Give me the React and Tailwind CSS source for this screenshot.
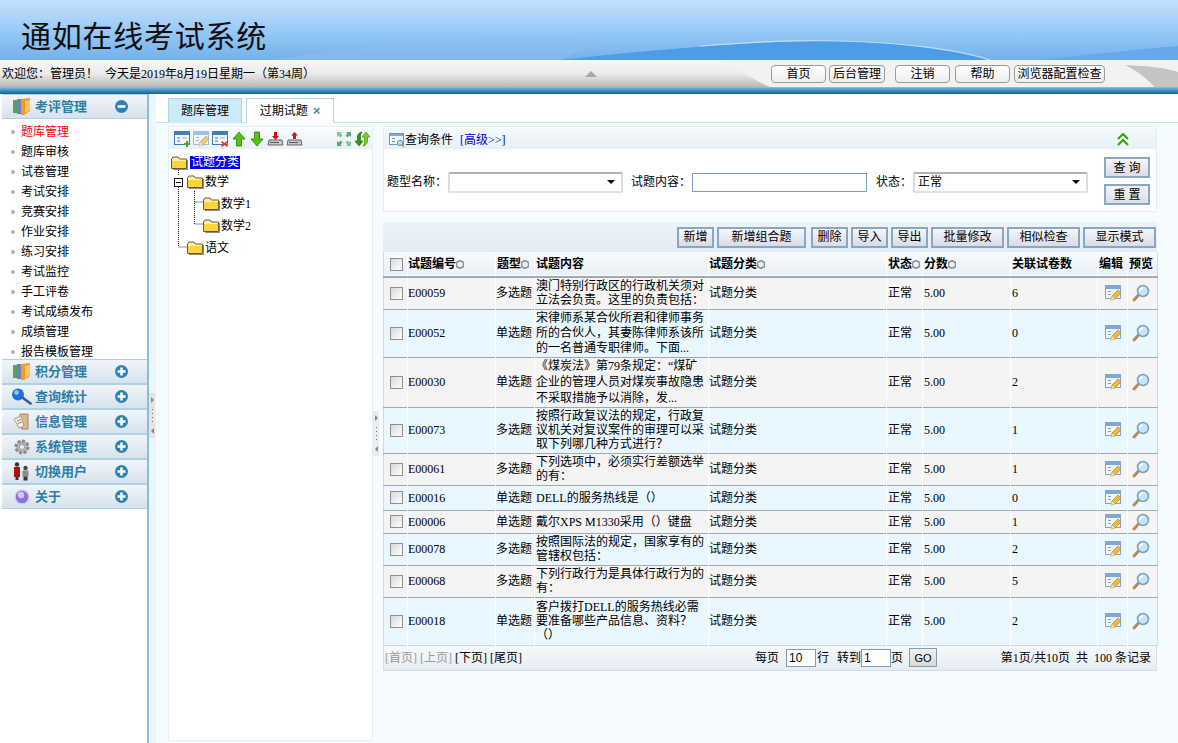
import { Fragment } from "react";

const menuItems = ["题库管理", "题库审核", "试卷管理", "考试安排", "竞赛安排", "作业安排", "练习安排", "考试监控", "手工评卷", "考试成绩发布", "成绩管理", "报告模板管理"];

const rows = [
  { id: "E00059", type: "多选题", content: "澳门特别行政区的行政机关须对\n立法会负责。这里的负责包括：", status: "正常", links: 6, h: "h-[32px]", lh: "leading-[14px]" },
  { id: "E00052", type: "单选题", content: "宋律师系某合伙所君和律师事务\n所的合伙人，其妻陈律师系该所\n的一名普通专职律师。下面...", status: "正常", links: 0, h: "h-[48px]", lh: "leading-[15px]" },
  { id: "E00030", type: "单选题", content: "《煤炭法》第79条规定：“煤矿\n企业的管理人员对煤炭事故隐患\n不采取措施予以消除，发...", status: "正常", links: 2, h: "h-[50px]", lh: "leading-[16px]" },
  { id: "E00073", type: "多选题", content: "按照行政复议法的规定，行政复\n议机关对复议案件的审理可以采\n取下列哪几种方式进行？", status: "正常", links: 1, h: "h-[46px]", lh: "leading-[14px]" },
  { id: "E00061", type: "多选题", content: "下列选项中，必须实行差额选举\n的有：", status: "正常", links: 1, h: "h-[32px]", lh: "leading-[14px]" },
  { id: "E00016", type: "单选题", content: "DELL的服务热线是（）", status: "正常", links: 0, h: "h-[25px]", lh: "leading-[14px]" },
  { id: "E00006", type: "单选题", content: "戴尔XPS M1330采用（）键盘", status: "正常", links: 1, h: "h-[23px]", lh: "leading-[14px]" },
  { id: "E00078", type: "多选题", content: "按照国际法的规定，国家享有的\n管辖权包括：", status: "正常", links: 2, h: "h-[32px]", lh: "leading-[14px]" },
  { id: "E00068", type: "多选题", content: "下列行政行为是具体行政行为的\n有：", status: "正常", links: 5, h: "h-[32px]", lh: "leading-[14px]" },
  { id: "E00018", type: "单选题", content: "客户拨打DELL的服务热线必需\n要准备哪些产品信息、资料？\n （）", status: "正常", links: 2, h: "h-[48px]", lh: "leading-[14px]" },
];

function WindowBase({ children }) {
  return (
    <svg width="17" height="16" viewBox="0 0 17 16" className="shrink-0">
      <rect x="0.5" y="0.5" width="15" height="13" fill="#f4f8fc" stroke="#3f76b8" />
      <rect x="1" y="1" width="14" height="3" fill="#3f7fc8" />
      <rect x="3" y="6" width="3" height="2" fill="#9db8d8" />
      <rect x="3" y="9" width="3" height="2" fill="#9db8d8" />
      <rect x="8" y="6" width="5" height="2" fill="#c4d4e6" />
      {children}
    </svg>
  );
}

function EditIcon({ faded }) {
  return (
    <svg width="17" height="16" viewBox="0 0 17 16" className={`shrink-0 ${faded ? "opacity-70" : ""}`}>
      <rect x="0.5" y="0.5" width="15" height="13" fill="#f2f7fc" stroke="#7ea6d2" />
      <rect x="1" y="1" width="14" height="3" fill="#7fa9dc" />
      <rect x="3" y="6" width="3" height="1" fill="#7ea6d2" />
      <rect x="3" y="9" width="3" height="1" fill="#7ea6d2" />
      <path d="M6 15 L7 11 L13 5 L16 8 L10 14 Z" fill="#f2b842" stroke="#b57d1c" strokeWidth="0.7" />
      <path d="M6 15 L7 11.5 L9.5 14 Z" fill="#f8e6c0" />
    </svg>
  );
}

function LensIcon() {
  return (
    <svg width="18" height="18" viewBox="0 0 18 18" className="shrink-0">
      <path d="M2 16 L7 10.5" stroke="#b98a54" strokeWidth="3" strokeLinecap="round" />
      <circle cx="11" cy="7" r="5.5" fill="#c4e6fa" stroke="#7d9fb8" strokeWidth="1.5" />
      <path d="M8 7 A3 3 0 0 1 11 4" fill="none" stroke="#fff" strokeWidth="1.4" />
    </svg>
  );
}

function ArrowIcon({ down }) {
  return (
    <svg width="14" height="16" viewBox="0 0 14 16" className={`shrink-0 mx-[1px] ${down ? "rotate-180" : ""}`}>
      <path d="M7 1 L13 8 H9.5 V15 H4.5 V8 H1 Z" fill="#54c414" stroke="#2c7d08" strokeWidth="0.8" />
    </svg>
  );
}

function DiskIcon({ up }) {
  return (
    <svg width="17" height="16" viewBox="0 0 17 16" className="shrink-0">
      <path d="M2 9 H15 L16 14 H1 Z" fill="#c9c9c9" stroke="#4a4a4a" strokeWidth="0.8" />
      <rect x="3" y="11" width="9" height="1" fill="#555" />
      {up
        ? <path d="M8.5 1 L12 4.5 H10 V8 H7 V4.5 H5 Z" fill="#e01010" />
        : <path d="M8.5 9 L12 5 H10 V1 H7 V5 H5 Z" fill="#c81010" />}
    </svg>
  );
}

function ExpandIcon() {
  return (
    <svg width="16" height="16" viewBox="0 0 16 16" className="shrink-0">
      <path d="M1 1 H6 L4.5 2.5 L6.5 4.5 L4.5 6.5 L2.5 4.5 L1 6 Z" fill="#7fc49a" />
      <path d="M15 1 H10 L11.5 2.5 L9.5 4.5 L11.5 6.5 L13.5 4.5 L15 6 Z" fill="#58ab62" />
      <path d="M1 15 H6 L4.5 13.5 L6.5 11.5 L4.5 9.5 L2.5 11.5 L1 10 Z" fill="#58ab62" />
      <path d="M15 15 H10 L11.5 13.5 L9.5 11.5 L11.5 9.5 L13.5 11.5 L15 10 Z" fill="#7fc49a" />
    </svg>
  );
}

function SwapIcon() {
  return (
    <svg width="17" height="16" viewBox="0 0 17 16" className="shrink-0">
      <path d="M5 15 L1 10 H3.5 V6 C3.5 3 6 1 8 1 C6.8 2 6.5 4 6.5 6 V10 H9 Z" fill="#2f9a12" stroke="#17600a" strokeWidth="0.6" />
      <path d="M12 1 L16 6 H13.5 V10 C13.5 13 11 15 9 15 C10.2 14 10.5 12 10.5 10 V6 H8 Z" fill="#7ad323" stroke="#2c7d08" strokeWidth="0.6" />
    </svg>
  );
}

function FolderIcon() {
  return (
    <svg width="17" height="14" viewBox="0 0 17 14" className="shrink-0">
      <path d="M0.5 3 L2 1 H7 L8.5 3 H15.5 V12.5 H0.5 Z" fill="#fff0a8" stroke="#6b5a2a" />
      <rect x="1" y="5" width="14" height="7" fill="#fdd43c" />
      <rect x="2" y="13" width="15" height="1" fill="#8a8a8a" />
      <rect x="16" y="4" width="1" height="9" fill="#8a8a8a" />
    </svg>
  );
}

function SortIcon() {
  return (
    <svg width="8" height="9" viewBox="0 0 8 9" className="inline-block shrink-0 align-[-1px]">
      <path d="M4 0.5 L7.5 2.5 V6.5 L4 8.5 L0.5 6.5 V2.5 Z" fill="#eeeeee" stroke="#8c9299" strokeWidth="1.6" />
    </svg>
  );
}

function BooksIcon() {
  return (
    <svg width="18" height="20" viewBox="0 0 18 20" className="shrink-0">
      <rect x="0" y="3" width="4" height="13" fill="#58a05c" />
      <rect x="4" y="2" width="4" height="15" fill="#5f86c0" />
      <path d="M8 2 L17 1 V14 L11 18 H8 Z" fill="#f49b24" />
      <path d="M12 4 L17 3 V13 L12 16 Z" fill="#fbc56a" />
    </svg>
  );
}

function SearchIcon() {
  return (
    <svg width="21" height="18" viewBox="0 0 21 18" className="shrink-0">
      <circle cx="7" cy="6.5" r="6" fill="#1f6fd8" />
      <circle cx="5.5" cy="4.5" r="2.4" fill="#8cc4f8" />
      <path d="M12 10 L19.5 15.5" stroke="#2a5d9c" strokeWidth="2.6" strokeLinecap="round" />
    </svg>
  );
}

function InfoIcon() {
  return (
    <svg width="18" height="18" viewBox="0 0 18 18" className="shrink-0">
      <path d="M7 1 H15 V16 H9 L7 14 Z" fill="#d9b98c" stroke="#a88557" />
      <path d="M1 6 L8 3 L11 13 L6 15 Z" fill="#f7f3e8" stroke="#a8a08c" />
      <path d="M4 8 L8 6.5 M5 10.5 L9 9" stroke="#b44" strokeWidth="0.8" />
    </svg>
  );
}

function GearIcon() {
  return (
    <svg width="18" height="18" viewBox="0 0 18 18" className="shrink-0">
      <circle cx="9" cy="9" r="6" fill="#b8b8b8" stroke="#8a8a8a" strokeWidth="3" strokeDasharray="3 1.6" />
      <circle cx="9" cy="9" r="2.5" fill="#efefef" stroke="#777" strokeWidth="0.6" />
    </svg>
  );
}

function UsersIcon() {
  return (
    <svg width="17" height="19" viewBox="0 0 17 19" className="shrink-0">
      <circle cx="4" cy="2.5" r="2.2" fill="#333" />
      <rect x="1" y="5" width="6" height="10" fill="#b01010" />
      <circle cx="12.5" cy="6" r="2.2" fill="#444" />
      <rect x="9.5" y="8.5" width="6" height="6" fill="#8a8a8a" />
      <rect x="10.5" y="14.5" width="4" height="4" fill="#333" />
      <rect x="2.5" y="15" width="3" height="3" fill="#333" />
    </svg>
  );
}

function OrbIcon() {
  return (
    <svg width="16" height="16" viewBox="0 0 16 16" className="shrink-0">
      <circle cx="8" cy="8" r="7" fill="#8f6fe0" stroke="#d8d0f4" strokeWidth="1.4" />
      <circle cx="7" cy="6" r="3.2" fill="#d5c8fa" />
    </svg>
  );
}

function ToggleIcon({ open }) {
  return (
    <svg width="13" height="13" viewBox="0 0 13 13" className="shrink-0">
      <circle cx="6.5" cy="6.5" r="6.5" fill="#2a83b6" />
      <rect x="2.5" y="5.2" width="8" height="2.6" fill="#fff" />
      {!open && <rect x="5.2" y="2.5" width="2.6" height="8" fill="#fff" />}
    </svg>
  );
}

function MenuHeader({ icon, label, open }) {
  return (
    <div className="relative h-[25px] flex items-center pl-[9px] pr-[19px] ml-[2px] bg-gradient-to-b from-[#f1f5f9] to-[#d7e2ec] border-t border-b border-t-[#a9d4e6] border-b-[#a9d4e6]">
      <span className="w-[23px] flex justify-center -ml-[1px] mr-[2px]">{icon}</span>
      <span className="flex-1 text-[13px] font-bold text-[#2a7ea8]">{label}</span>
      <ToggleIcon open={open} />
    </div>
  );
}

function ActionButton({ children, w }) {
  return (
    <button className={`${w} h-[21px] border-2 border-[#86a8c2] bg-gradient-to-b from-[#f6f6fa] to-[#d9dbe6] text-[12px] leading-[16px] text-black flex items-center justify-center`}>
      {children}
    </button>
  );
}

function NavButton({ children, w, ml }) {
  return (
    <button className={`${w} ${ml} h-[18px] rounded-[4px] border border-[#9a9a9a] bg-gradient-to-b from-white to-[#eeeeee] text-[12px] leading-[16px] text-black flex items-center justify-center whitespace-nowrap`}>
      {children}
    </button>
  );
}

function FakeSelect({ w, value }) {
  return (
    <div className={`${w} h-[21px] border-2 border-t-[#b2b2b2] border-l-[#dddddd] border-r-[#dddddd] border-b-[#e2e2e2] rounded-[2px] bg-white flex items-center justify-between pl-[3px] pr-[6px]`}>
      <span>{value}</span>
      <span className="w-0 h-0 border-l-[4px] border-r-[4px] border-t-[4px] border-l-transparent border-r-transparent border-t-black" />
    </div>
  );
}

function Check() {
  return <input type="checkbox" className="appearance-none block w-[13px] h-[13px] ml-[2px] border border-[#8f8f8f] bg-gradient-to-br from-[#d8d8d8] to-white" />;
}

function SplitHandle({ className }) {
  return (
    <div className={`w-[6px] h-[45px] flex flex-col items-center justify-between py-[4px] ${className}`}>
      <span className="w-0 h-0 border-t-[3px] border-b-[3px] border-l-[3px] border-t-transparent border-b-transparent border-l-[#888]" />
      <span className="flex flex-col gap-[3px]">
        <span className="w-px h-px bg-[#777]" />
        <span className="w-px h-px bg-[#777]" />
        <span className="w-px h-px bg-[#777]" />
        <span className="w-px h-px bg-[#777]" />
      </span>
      <span className="w-0 h-0 border-t-[3px] border-b-[3px] border-r-[3px] border-t-transparent border-b-transparent border-r-[#888]" />
    </div>
  );
}

export default function App() {
  return (
    <div className="w-[1178px] h-[743px] overflow-hidden flex flex-col bg-white text-[12px] leading-[14px] text-black font-['Liberation_Serif','Noto_Sans_CJK_SC',serif]">
      {/* Banner */}
      <div className="relative h-[60px] shrink-0 bg-gradient-to-b from-[#c2e2ff] to-[#72b1ec] overflow-hidden">
        <svg className="absolute inset-0" width="1178" height="60" viewBox="0 0 1178 60">
          <path d="M560 60 C650 50 760 40 840 41 C900 42 960 50 990 60 Z" fill="#4c9ce9" />
          <path d="M700 46 C760 41 800 40 840 41 C900 42 960 50 990 60" fill="none" stroke="#bcdcf8" strokeWidth="1.2" />
          <path d="M1040 60 C1080 56 1130 50 1178 46 V60 Z" fill="#64a9ec" />
          <path d="M270 60 C330 50 400 44 480 40 C520 38 560 38 600 42 L560 60 Z" fill="#8dbef0" opacity="0.5" />
        </svg>
        <div className="relative pl-[21px] pt-[15px] text-[30px] leading-[38px] tracking-[0.75px] text-[#111] font-['Noto_Sans_CJK_SC',sans-serif]">通如在线考试系统</div>
      </div>

      {/* Welcome bar */}
      <div className="relative h-[27px] shrink-0 bg-gradient-to-b from-[#f7f7f7] via-[#ebebeb] to-[#b9b9b9] flex items-center overflow-hidden">
        <svg className="absolute inset-0" width="1178" height="27" viewBox="0 0 1178 27">
          <path d="M720 0 C740 8 752 20 770 27 H1155 C1150 22 1140 12 1125 5 C1150 6 1165 8 1178 12 V0 Z" fill="#f2f2f2" />
          <path d="M1125 5 C1140 12 1150 22 1155 27 H1178 V12 C1165 8 1150 6 1125 5 Z" fill="#c4c4c4" />
        </svg>
        <div className="relative w-full flex items-center">
          <span className="ml-[2px] w-[103px]">欢迎您：管理员！</span>
          <span className="w-[205px]">今天是2019年8月19日星期一（第34周）</span>
          <span className="ml-[275px] w-0 h-0 border-l-[6px] border-r-[6px] border-b-[6px] border-l-transparent border-r-transparent border-b-[#a8a8a8]" />
          <NavButton w="w-[55px]" ml="ml-[174px]">首页</NavButton>
          <NavButton w="w-[56px]" ml="ml-[3px]">后台管理</NavButton>
          <NavButton w="w-[55px]" ml="ml-[10px]">注销</NavButton>
          <NavButton w="w-[55px]" ml="ml-[5px]">帮助</NavButton>
          <NavButton w="w-[91px]" ml="ml-[4px]">浏览器配置检查</NavButton>
        </div>
      </div>

      <div className="h-[7px] shrink-0 bg-gradient-to-b from-[#8cc3de] via-[#3f8fc0] to-[#17618c]" />

      <div className="flex flex-1 min-h-0">
        {/* Side menu */}
        <div className="w-[147px] shrink-0 bg-white">
          <MenuHeader icon={<BooksIcon />} label="考评管理" open />
          <div className="h-[240px] pt-[3px]">
            {menuItems.map((item, i) => (
              <div key={item} className="h-[20px] flex items-center pl-[11px]">
                <span className="w-[4px] h-[4px] bg-[#aab2bc] rounded-full mr-[6px]" />
                <span className={i === 0 ? "text-[#ff0000]" : ""}>{item}</span>
              </div>
            ))}
          </div>
          <MenuHeader icon={<BooksIcon />} label="积分管理" />
          <MenuHeader icon={<SearchIcon />} label="查询统计" />
          <MenuHeader icon={<InfoIcon />} label="信息管理" />
          <MenuHeader icon={<GearIcon />} label="系统管理" />
          <MenuHeader icon={<UsersIcon />} label="切换用户" />
          <MenuHeader icon={<OrbIcon />} label="关于" />
        </div>

        {/* Side splitter */}
        <div className="w-[2px] shrink-0 bg-[#8cbcd8]" />
        <div className="w-[7px] shrink-0 bg-[#eaf6fd] flex items-center">
          <SplitHandle className="-mt-[6px] bg-[#e4e4e4]" />
        </div>

        {/* Main */}
        <div className="flex-1 min-w-0 bg-[#f6fbfe] flex flex-col">
          <div className="h-[29px] shrink-0 bg-white border-b border-[#c4e4f2] flex items-end pl-[12px] gap-[4px]">
            <div className="w-[74px] h-[25px] -mb-px border border-b-0 border-[#a9d8ee] bg-[#cdeaf8] flex items-center justify-center">题库管理</div>
            <div className="w-[88px] h-[25px] -mb-px border border-[#a9d8ee] border-b-white bg-white flex items-center justify-center gap-[5px]">
              过期试题 <span className="text-[#4b8aa8] text-[13px] font-bold font-['Liberation_Sans',sans-serif]">×</span>
            </div>
          </div>

          <div className="flex flex-1 min-h-0 pl-[12px] pt-[3px]">
            {/* Tree */}
            <div className="w-[205px] h-[615px] shrink-0 bg-white border border-[#e3eff6]">
              <div className="h-[20px] mt-[2px] bg-gradient-to-b from-[#f8fbfd] to-[#e8f1f7] flex items-center pl-[5px]">
                <div className="flex items-center gap-[2px]">
                  <WindowBase>
                    <path d="M10 12 H12 V10 H14 V12 H16 V14 H14 V16 H12 V14 H10 Z" fill="#3fa82a" />
                  </WindowBase>
                  <EditIcon faded />
                  <WindowBase>
                    <path d="M10 10 L12.5 12 L15 10 L16 11 L14 13 L16 15 L15 16 L12.5 14 L10 16 L9 15 L11 13 L9 11 Z" fill="#e03818" />
                  </WindowBase>
                  <ArrowIcon />
                  <ArrowIcon down />
                  <DiskIcon />
                  <DiskIcon up />
                </div>
                <div className="ml-[33px] flex items-center gap-[2px]">
                  <ExpandIcon />
                  <SwapIcon />
                </div>
              </div>
              <div className="relative pl-[2px] pt-[5px]">
                <svg className="absolute left-0 top-0" width="60" height="100" viewBox="0 0 60 100">
                  <path d="M9.5 19 V27 M9.5 36 V98 H18 M25.5 42 V75 H34 M25.5 53 H34" stroke="#222" strokeDasharray="1 1" fill="none" />
                </svg>
                <div className="relative h-[17px] flex items-center gap-[2px]">
                  <FolderIcon />
                  <span className="bg-[#0000ff] text-white h-[13px] leading-[13px] px-px">试题分类</span>
                </div>
                <div className="relative h-[22px] flex items-center gap-[1px] pl-[3px]">
                  <span className="w-[9px] h-[9px] border border-[#111] bg-white flex items-center justify-center mr-[3px]">
                    <span className="w-[5px] h-px bg-black" />
                  </span>
                  <FolderIcon />
                  <span>数学</span>
                </div>
                <div className="relative h-[22px] flex items-center gap-[1px] pl-[32px]">
                  <FolderIcon />
                  <span>数学1</span>
                </div>
                <div className="relative h-[22px] flex items-center gap-[1px] pl-[32px]">
                  <FolderIcon />
                  <span>数学2</span>
                </div>
                <div className="relative h-[22px] flex items-center gap-[1px] pl-[16px]">
                  <FolderIcon />
                  <span>语文</span>
                </div>
              </div>
            </div>

            {/* Tree splitter */}
            <div className="w-[10px] shrink-0 flex items-start">
              <SplitHandle className="mt-[285px] bg-[#ececec]" />
            </div>

            {/* Right column */}
            <div className="w-[774px] shrink-0">
              <div className="bg-white border border-[#e3eff6] h-[86px]">
                <div className="h-[21px] mt-px pt-[2px] bg-gradient-to-b from-[#f5f9fc] to-[#e6f1f8] flex items-center pl-[5px] pr-[27px]">
                  <svg width="16" height="16" viewBox="0 0 16 16" className="shrink-0">
                    <rect x="0.5" y="1.5" width="14" height="11" fill="#f2f7fc" stroke="#6f94bc" />
                    <rect x="1" y="2" width="13" height="2" fill="#7fa9dc" />
                    <rect x="3" y="6" width="3" height="1" fill="#6f94bc" />
                    <rect x="3" y="9" width="3" height="1" fill="#6f94bc" />
                    <circle cx="11" cy="11" r="2.6" fill="#bfe3f6" stroke="#5b8fb0" />
                    <path d="M13 13 L15 15" stroke="#c08a3c" strokeWidth="1.4" />
                  </svg>
                  <span>查询条件</span>
                  <span className="ml-[7px] text-[#0000dd]">[高级&gt;&gt;]</span>
                  <svg width="12" height="13" viewBox="0 0 12 13" className="ml-auto">
                    <path d="M1 6 L6 1 L11 6 M1 12 L6 7 L11 12" fill="none" stroke="#35a80e" strokeWidth="2.2" />
                  </svg>
                </div>
                <div className="flex items-center h-[62px] pt-[4px] pl-[3px]">
                  <span className="w-[61px]">题型名称：</span>
                  <FakeSelect w="w-[175px]" value="" />
                  <span className="ml-[8px] w-[61px]">试题内容：</span>
                  <div className="w-[175px] h-[19px] border border-[#7f9db9] bg-white" />
                  <span className="ml-[9px] w-[37px]">状态：</span>
                  <FakeSelect w="w-[175px]" value="正常" />
                  <div className="ml-[16px] -mt-[2px] flex flex-col gap-[6px]">
                    <ActionButton w="w-[46px]">查 询</ActionButton>
                    <ActionButton w="w-[46px]">重 置</ActionButton>
                  </div>
                </div>
              </div>

              <div className="mt-[10px] h-[30px] bg-gradient-to-b from-[#edf4f9] to-[#e3edf4] flex items-center justify-end gap-[3px] pr-[1px]">
                <ActionButton w="w-[37px]">新增</ActionButton>
                <ActionButton w="w-[89px]">新增组合题</ActionButton>
                <span className="w-0 -ml-px" />
                <ActionButton w="w-[37px]">删除</ActionButton>
                <ActionButton w="w-[37px]">导入</ActionButton>
                <ActionButton w="w-[37px]">导出</ActionButton>
                <ActionButton w="w-[73px]">批量修改</ActionButton>
                <ActionButton w="w-[73px]">相似检查</ActionButton>
                <ActionButton w="w-[73px]">显示模式</ActionButton>
              </div>

              <table className="table-fixed w-[774px] border-collapse border-x border-x-[#d8d8d8]">
                <colgroup>
                  <col className="w-[24px]" />
                  <col className="w-[88px]" />
                  <col className="w-[39px]" />
                  <col className="w-[174px]" />
                  <col className="w-[178px]" />
                  <col className="w-[36px]" />
                  <col className="w-[88px]" />
                  <col className="w-[87px]" />
                  <col className="w-[30px]" />
                  <col className="w-[30px]" />
                </colgroup>
                <thead>
                  <tr className="h-[25px] bg-gradient-to-b from-[#f9fbfd] to-[#e8f1f7] border-b-2 border-b-[#a8a8a8] text-left">
                    <th className="border-r border-white p-0"><div className="flex justify-center"><Check /></div></th>
                    <th className="border-r border-white p-0 whitespace-nowrap">试题编号<SortIcon /></th>
                    <th className="border-r border-white p-0 pl-px whitespace-nowrap">题型<SortIcon /></th>
                    <th className="border-r border-white p-0 pl-px">试题内容</th>
                    <th className="border-r border-white p-0 whitespace-nowrap">试题分类<SortIcon /></th>
                    <th className="border-r border-white p-0 pl-px whitespace-nowrap">状态<SortIcon /></th>
                    <th className="border-r border-white p-0 pl-px whitespace-nowrap">分数<SortIcon /></th>
                    <th className="border-r border-white p-0 pl-px">关联试卷数</th>
                    <th className="border-r border-white p-0 pl-px whitespace-nowrap">编辑</th>
                    <th className="p-0 pl-px whitespace-nowrap">预览</th>
                  </tr>
                </thead>
                <tbody>
                  {rows.map((row, i) => (
                    <Fragment key={row.id}>
                      <tr className={`${row.h} ${i % 2 === 0 ? "bg-[#f4f4f4]" : "bg-[#e9f7ff]"} border-b ${i === rows.length - 1 ? "border-b-[#d4d4d4]" : "border-b-[#a8a8a8]"}`}>
                        <td className="border-r border-white p-0"><div className="flex justify-center"><Check /></div></td>
                        <td className="border-r border-white p-0">{row.id}</td>
                        <td className="border-r border-white p-0 whitespace-nowrap">{row.type}</td>
                        <td className={`border-r border-white p-0 pl-px whitespace-pre-line ${row.lh}`}>{row.content}</td>
                        <td className="border-r border-white p-0">试题分类</td>
                        <td className="border-r border-white p-0 pl-px">{row.status}</td>
                        <td className="border-r border-white p-0 pl-px">5.00</td>
                        <td className="border-r border-white p-0 pl-px">{row.links}</td>
                        <td className="border-r border-white p-0"><div className="flex justify-center pl-[2px]"><EditIcon /></div></td>
                        <td className="p-0"><div className="flex justify-center pr-[3px]"><LensIcon /></div></td>
                      </tr>
                    </Fragment>
                  ))}
                </tbody>
              </table>

              <div className="h-[25px] flex items-center pl-[1px] pr-[5px] bg-gradient-to-b from-[#f6f8fb] to-[#e6edf4] border-x border-b border-[#dcdcdc]">
                <span className="text-[#9a9a9a]">[首页]</span>
                <span className="ml-[3px] text-[#9a9a9a]">[上页]</span>
                <span className="ml-[3px]">[下页]</span>
                <span className="ml-[3px]">[尾页]</span>
                <span className="ml-[233px]">每页</span>
                <span className="ml-[7px] w-[30px] h-[18px] border border-[#7f9db9] bg-white pl-[2px] leading-[16px] font-['Liberation_Sans',sans-serif]">10</span>
                <span className="ml-px">行</span>
                <span className="ml-[8px]">转到</span>
                <span className="w-[30px] h-[18px] border border-[#7f9db9] bg-white pl-[2px] leading-[16px] font-['Liberation_Sans',sans-serif]">1</span>
                <span>页</span>
                <span className="ml-[6px] w-[28px] h-[19px] border border-[#7f9db9] bg-gradient-to-b from-[#f4f4f4] to-[#d8d8d8] flex items-center justify-center text-[11px] font-['Liberation_Sans',sans-serif]">GO</span>
                <span className="ml-auto whitespace-nowrap">第1页/共10页&nbsp;&nbsp;共&nbsp;&nbsp;100 条记录</span>
              </div>
            </div>
          </div>
        </div>
      </div>
    </div>
  );
}
